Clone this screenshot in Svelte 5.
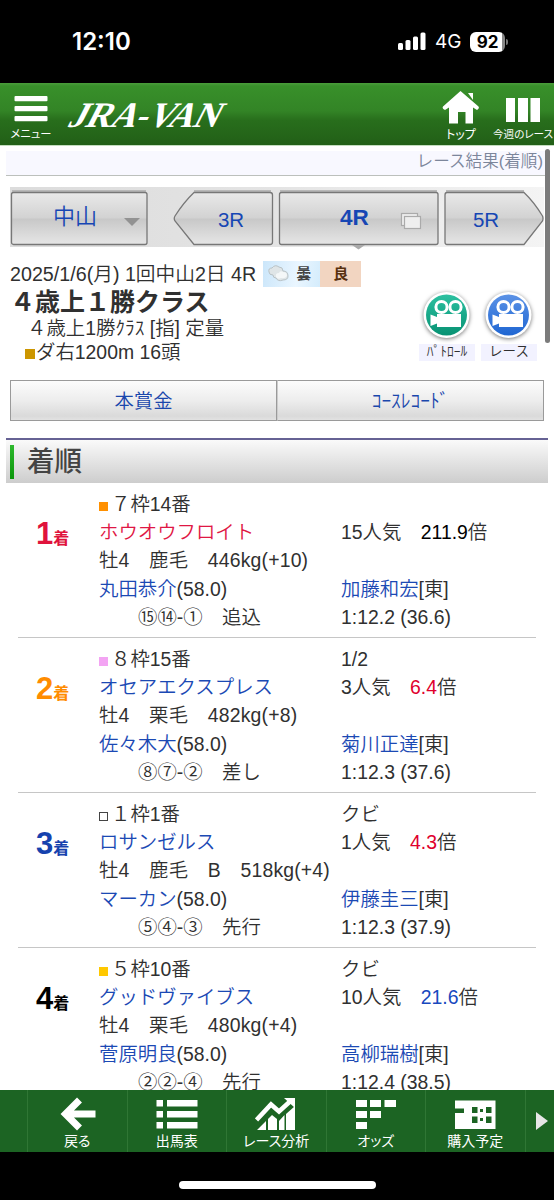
<script lang="ts">
	interface Result {
		rank: number;
		rankColor: string;
		frame: string;
		frameColor: string;
		number: number;
		name: string;
		winner?: boolean;
		body: string;
		jockey: string;
		corners: string;
		style: string;
		margin: string;
		popularity: number;
		odds: string;
		oddsColor: string;
		trainer: string;
		time: string;
	}

	const results: Result[] = [
		{
			rank: 1, rankColor: '#e0133c', frame: '７', frameColor: '#ff9000', number: 14,
			name: 'ホウオウフロイト', winner: true, body: '牡4　鹿毛　446kg(+10)',
			jockey: '丸田恭介', corners: '⑮⑭-①', style: '追込', margin: '',
			popularity: 15, odds: '211.9', oddsColor: '#000', trainer: '加藤和宏', time: '1:12.2 (36.6)'
		},
		{
			rank: 2, rankColor: '#ff8c00', frame: '８', frameColor: '#f3a4f3', number: 15,
			name: 'オセアエクスプレス', body: '牡4　栗毛　482kg(+8)',
			jockey: '佐々木大', corners: '⑧⑦-②', style: '差し', margin: '1/2',
			popularity: 3, odds: '6.4', oddsColor: '#e0002d', trainer: '菊川正達', time: '1:12.3 (37.6)'
		},
		{
			rank: 3, rankColor: '#1642ae', frame: '１', frameColor: '#fff', number: 1,
			name: 'ロサンゼルス', body: '牡4　鹿毛　B　518kg(+4)',
			jockey: 'マーカン', corners: '⑤④-③', style: '先行', margin: 'クビ',
			popularity: 1, odds: '4.3', oddsColor: '#e0002d', trainer: '伊藤圭三', time: '1:12.3 (37.9)'
		},
		{
			rank: 4, rankColor: '#000', frame: '５', frameColor: '#ffc800', number: 10,
			name: 'グッドヴァイブス', body: '牡4　栗毛　480kg(+4)',
			jockey: '菅原明良', corners: '②②-④', style: '先行', margin: 'クビ',
			popularity: 10, odds: '21.6', oddsColor: '#1848be', trainer: '高柳瑞樹', time: '1:12.4 (38.5)'
		}
	];

	const movies = [
		{ label: 'ﾊﾟﾄﾛｰﾙ', top: '#2cc0a0', bottom: '#079273' },
		{ label: 'レース', top: '#5b92e6', bottom: '#1f66d2' }
	];
</script>

<div class="phone">
	<div class="status">
		<span class="clock">12:10</span>
		<div class="signals">
			<svg width="28" height="19" viewBox="0 0 28 19" fill="#fff">
				<rect x="0" y="11" width="5" height="7" rx="1.5" />
				<rect x="7.5" y="8" width="5" height="10" rx="1.5" />
				<rect x="15" y="4.5" width="5" height="13.5" rx="1.5" />
				<rect x="22.5" y="0.5" width="5" height="17.5" rx="1.5" />
			</svg>
			<span class="carrier">4G</span>
			<span class="battery">92</span>
			<i class="battery-tip"></i>
		</div>
	</div>

	<header class="topbar">
		<div class="menu">
			<svg width="34" height="26" viewBox="0 0 34 26" fill="#fff">
				<rect x="0.5" y="0" width="33" height="5.3" rx="1" />
				<rect x="0.5" y="10" width="33" height="5.3" rx="1" />
				<rect x="0.5" y="20" width="33" height="5.3" rx="1" />
			</svg>
			<span>メニュー</span>
		</div>
		<svg class="logo" width="176" height="52" viewBox="0 0 176 52">
			<g transform="translate(4 36) skewX(-27)">
				<text x="0" y="0" textLength="150" lengthAdjust="spacingAndGlyphs">JRA-VAN</text>
			</g>
		</svg>
		<div class="shortcut home">
			<svg width="38" height="34" viewBox="0 0 38 34" fill="#fff">
				<path d="M18.5 0 36.5 15.5Q37.5 16.8 36.3 18L35 19 31 16.5V32.5H23.5V21H16V32.5H7V16.5L3 19 1.3 18Q0 16.8 1 15.5Z" />
				<path d="M26 2H31V9Z" />
			</svg>
			<span>トップ</span>
		</div>
		<div class="shortcut week">
			<svg width="36" height="26" viewBox="0 0 36 26" fill="#fff">
				<path d="M1 1H10V25H1ZM13 1H23V25H13ZM25.5 1H35V25H25.5Z" />
			</svg>
			<span>今週のレース</span>
		</div>
	</header>

	<main>
		<div class="scrollbar"></div>
		<div class="page-title">レース結果(着順)</div>

		<nav class="races">
			<svg class="race-nav" width="534" height="62" viewBox="0 0 534 62">
				<defs>
					<linearGradient id="steel" x1="0" y1="0" x2="0" y2="1">
						<stop offset="0" stop-color="#e9e9e9" />
						<stop offset="0.49" stop-color="#d2d2d2" />
						<stop offset="0.51" stop-color="#c8c8c8" />
						<stop offset="1" stop-color="#e6e6e6" />
					</linearGradient>
					<linearGradient id="strip" x1="0" y1="0" x2="1" y2="0">
						<stop offset="0" stop-color="#dcdcdc" />
						<stop offset="0.5" stop-color="#e4e4e4" />
						<stop offset="1" stop-color="#f4f4f4" />
					</linearGradient>
				</defs>
				<rect x="0" y="1" width="534" height="60" fill="url(#strip)" />
				<g fill="none" stroke="#b8b8b8" stroke-width="3">
					<path d="M2 5.5H136M184 5.5H261M270 5.5H427M436 5.5H514" />
				</g>
				<g fill="url(#steel)" stroke="#777" stroke-width="1.3">
					<rect x="1.5" y="6.5" width="135.5" height="52" rx="2" />
					<path d="M184 6.5H260Q262.5 6.5 262.5 9V56Q262.5 58.5 260 58.5H184L165 35Q163.5 32.5 165 30Q174 16 184 6.5Z" />
					<rect x="269.5" y="6.5" width="158.5" height="52" rx="2" />
					<path d="M437 6.5H514Q524 16 532.500 30Q533.500 32.500 532.500 35L514 58.5H437Q435 58.5 435 56V9Q435 6.5 437 6.5Z" />
				</g>
				<path d="M114 32H130L122 40Z" fill="#929292" />
				<path d="M342 59H355L348.5 63.500Z" fill="#aaa" />
				<g stroke="#aaa" stroke-width="1.2" fill="#eee">
					<rect x="391.5" y="27.5" width="16" height="12" />
					<rect x="394.5" y="30.5" width="16" height="12" />
				</g>
				<g text-anchor="middle" class="race-text">
					<text x="65" y="38" font-size="22">中山</text>
					<text x="221" y="40.500" font-size="20.500">3R</text>
					<text x="344.5" y="38.500" font-size="22.5" font-weight="700">4R</text>
					<text x="476" y="40.500" font-size="20.500">5R</text>
				</g>
			</svg>
		</nav>

		<section class="race-info">
			<div class="date-line">
				<span>2025/1/6(月) 1回中山2日 4R</span>
				<div class="conditions">
					<span class="weather">
						<svg width="22" height="20" viewBox="0 0 22 20">
							<path d="M2 8Q1 4 5 4Q8 0 12 3Q16 3 16 7Q21 7 21 12Q21 16 16 16Q11 18 9 14Q6 14 6 11Q2 11 2 8Z" fill="#dfe5e7" stroke="#b8c2c6" />
							<path d="M9 13Q8 9 12 9Q13 6 16 8Q20 8 20 12Q18 15 14 14Q11 16 9 13Z" fill="#f4f7f8" />
						</svg>
						曇
					</span>
					<span class="going">良</span>
				</div>
			</div>
			<h1>４歳上１勝クラス</h1>
			<div class="class-line">４歳上1勝ｸﾗｽ [指] 定量</div>
			<div class="course-line"><i class="surface"></i>ダ右1200m 16頭</div>
			<div class="movies">
				{#each movies as movie, i (movie.label)}
					<div class="movie">
						<svg width="56" height="56" viewBox="0 0 56 56">
							<defs>
								<linearGradient id={`movie-${i}`} x1="0" y1="0" x2="0" y2="1">
									<stop offset="0" stop-color={movie.top} />
									<stop offset="1" stop-color={movie.bottom} />
								</linearGradient>
							</defs>
							<circle class="disc" cx="27.5" cy="27" r="23" fill="#fff" />
							<circle cx="27.5" cy="27" r="20.5" fill={`url(#movie-${i})`} />
							<g fill="none" stroke="#fff" stroke-width="3">
								<circle cx="22.5" cy="19" r="5.6" />
								<circle cx="36.5" cy="19" r="5.6" />
							</g>
							<path d="M18 26H42V39H18V35.5L11.5 38V26.5L18 29Z" fill="#fff" />
						</svg>
						<span>{movie.label}</span>
					</div>
				{/each}
			</div>
		</section>

		<div class="links">
			<a href="#prize">本賞金</a>
			<a href="#record">ｺｰｽﾚｺｰﾄﾞ</a>
		</div>

		<h2>着順</h2>

		<div class="results">
			{#each results as r (r.rank)}
				<article>
					<div class="rank" style={`color: ${r.rankColor}`}><b>{r.rank}</b>着</div>
					<div class="horse">
						<div>
							<i class="frame" class:outlined={r.frame === '１'} style={`background: ${r.frameColor}`}></i>{r.frame}枠{r.number}番
						</div>
						<div class="link" class:winner={r.winner}>{r.name}</div>
						<div class="body">{r.body}</div>
						<div><span class="link">{r.jockey}</span>(58.0)</div>
						<div class="corners">{r.corners}　{r.style}</div>
					</div>
					<div class="record">
						<div>{r.margin}</div>
						<div>{r.popularity}人気　<span style={`color: ${r.oddsColor}`}>{r.odds}</span>倍</div>
						<div></div>
						<div><span class="link">{r.trainer}</span>[東]</div>
						<div>{r.time}</div>
					</div>
				</article>
			{/each}
		</div>
	</main>

	<footer>
		<div class="edge"></div>
		<div class="tab">
			<svg width="42" height="34" viewBox="0 0 42 34">
				<path d="M23.5 3 9.5 17 23.5 31M10 17H39.500" fill="none" stroke="#fff" stroke-width="7" />
			</svg>
			<span>戻る</span>
		</div>
		<div class="tab">
			<svg width="42" height="34" viewBox="0 0 42 34" fill="#fff">
				<path d="M0.5 3H7V9.5H0.5ZM11 3H41.5V9.5H11ZM0.5 14H7V20.5H0.5ZM11 14H41.5V20.5H11ZM0.5 25H7V31.5H0.5ZM11 25H41.5V31.5H11Z" />
			</svg>
			<span>出馬表</span>
		</div>
		<div class="tab">
			<svg width="42" height="34" viewBox="0 0 42 34">
				<path d="M2 33 11 24V33ZM13 22 17 18 22 22V33H13ZM24 24 29.5 18V33H24ZM31 17 40 9V33H31Z" fill="#fff" />
				<path d="M1.500 23 16 7.500 24 14.500 35 4.500" fill="none" stroke="#fff" stroke-width="4.500" />
				<path d="M29 1H40V11Z" fill="#fff" />
			</svg>
			<span>レース分析</span>
		</div>
		<div class="tab">
			<svg width="42" height="34" viewBox="0 0 42 34" fill="#fff">
				<path d="M1 3H12V10H1ZM15 3H26V10H15ZM29.5 3H41V10H29.5ZM1 14H12V21H1ZM15 14H26V21H15ZM1 25H12V32H1Z" />
			</svg>
			<span>オッズ</span>
		</div>
		<div class="tab">
			<svg width="42" height="34" viewBox="0 0 42 34">
				<path d="M1 3.5H41.5V32H1V16H10V11.5H1Z" fill="#fff" />
				<path d="M18 10H23.5V16H18ZM32 10H37.5V16H32ZM18 19.5H23.5V26H18ZM32 19.5H37.5V26H32ZM26 12H29V15H26ZM26 21H29V24H26Z" fill="#1c6423" />
			</svg>
			<span>購入予定</span>
		</div>
		<div class="more">
			<svg width="14" height="20" viewBox="0 0 14 20"><path d="M1 1 13 10 1 19Z" fill="#e6e6e6" /></svg>
		</div>
	</footer>
	<div class="home-area"><i></i></div>
</div>

<style>
	:global(body) {
		background: #000;
	}

	.phone {
		width: 554px;
		height: 1200px;
		overflow: hidden;
		display: flex;
		flex-direction: column;
		font-family: 'Liberation Sans', 'Noto Sans CJK JP', sans-serif;
		font-weight: 350;
		font-size: 19.4px;
		color: #303030;
		white-space: nowrap;
	}

	svg {
		display: block;
		flex: none;
	}

	.status {
		height: 83px;
		flex: none;
		box-sizing: border-box;
		padding: 0 46px 0 72px;
		background: #000;
		color: #fff;
		display: flex;
		align-items: center;
		justify-content: space-between;
		font-family: Inter, sans-serif;
	}

	.clock {
		font-size: 24px;
		font-weight: 600;
	}

	.signals {
		display: flex;
		align-items: center;
	}

	.carrier {
		margin-left: 9px;
		width: 27px;
		font-size: 19px;
		font-weight: 400;
	}

	.battery {
		margin-left: 8px;
		width: 35px;
		height: 20px;
		border-radius: 6px;
		background: linear-gradient(90deg, #fff 92%, #888 92%);
		color: #000;
		font-size: 17px;
		font-weight: 700;
		line-height: 20px;
		text-align: center;
	}

	.battery-tip {
		width: 2px;
		height: 6px;
		margin-left: 1px;
		border-radius: 0 2px 2px 0;
		background: #777;
	}

	.topbar {
		height: 62px;
		flex: none;
		display: flex;
		background: linear-gradient(#4a9d3b 0, #38902a 3px, #338426 45%, #286e1c 60%, #225f17);
		color: #fff;
		font-weight: 400;
		font-feature-settings: 'palt';
	}

	.menu {
		width: 62px;
		padding-top: 13px;
		display: flex;
		flex-direction: column;
		align-items: center;
		font-size: 11.3px;
		line-height: 25px;
	}

	.logo {
		margin-top: 8px;
	}

	.logo text {
		font-family: 'Liberation Serif', serif;
		font-size: 36px;
		font-weight: 700;
		fill: #fff;
	}

	.shortcut {
		display: flex;
		flex-direction: column;
		align-items: center;
	}

	.home {
		width: 62px;
		margin-left: auto;
		padding-top: 8px;
		font-size: 12px;
		line-height: 20px;
	}

	.week {
		width: 62px;
		padding-top: 14px;
		font-size: 10.6px;
		line-height: 23px;
	}

	main {
		position: relative;
		height: 945px;
		flex: none;
		box-sizing: border-box;
		overflow: hidden;
		background: #fff;
		border-top: 1px solid #c4ddbf;
	}

	.scrollbar {
		position: absolute;
		top: 3px;
		right: 4px;
		width: 5px;
		height: 194px;
		border-radius: 3px;
		background: #7b7b7b;
	}

	.page-title {
		margin: 5px 6px 0;
		height: 24px;
		padding-right: 5px;
		border-bottom: 1px solid #bcc0bc;
		background: #f8f8ff;
		color: #7c869b;
		font-size: 16.6px;
		line-height: 21px;
		text-align: right;
	}

	.races {
		padding: 10px 10px 0;
	}

	.race-nav {
		overflow: visible;
	}

	.race-text {
		fill: #1646b4;
	}

	.race-info {
		position: relative;
		height: 132px;
		padding-left: 10px;
	}

	.date-line {
		height: 40px;
		box-sizing: border-box;
		padding-top: 13px;
		display: flex;
		gap: 7px;
		font-size: 19.7px;
		line-height: 26px;
	}

	.conditions {
		display: flex;
		height: 26px;
		font-size: 15px;
		font-weight: 700;
		line-height: 26px;
	}

	.weather {
		width: 57px;
		display: flex;
		align-items: center;
		gap: 7px;
		padding-left: 4px;
		box-sizing: border-box;
		background: linear-gradient(100deg, #cbe6fa, #eaf6ff 60%, #d4ecfc);
		color: #444;
	}

	.going {
		width: 41px;
		background: #f2d5c1;
		color: #583010;
		text-align: center;
	}

	h1 {
		margin: 0;
		font-size: 25px;
		line-height: 28px;
		font-weight: 700;
	}

	.class-line {
		padding-left: 17px;
		line-height: 25px;
	}

	.course-line {
		padding-left: 15px;
		line-height: 22px;
	}

	.surface {
		display: inline-block;
		width: 10px;
		height: 10px;
		margin-right: 1px;
		background: #cc9600;
	}

	.movies {
		position: absolute;
		top: 40px;
		right: 17px;
		display: flex;
		gap: 6px;
	}

	.movie {
		width: 56px;
	}

	.movie span {
		display: block;
		height: 17px;
		background: #f2f2ff;
		font-size: 13.5px;
		line-height: 16px;
		text-align: center;
	}

	.disc {
		filter: drop-shadow(0 1px 2px #777);
	}

	.links {
		display: flex;
		margin: 0 10px;
	}

	.links a {
		flex: 1;
		height: 41px;
		box-sizing: border-box;
		border: 1px solid #9a9a9a;
		background: linear-gradient(#fcfcfc, #ededed 50%, #dadada 90%, #e2e2e2);
		color: #1a47ac;
		line-height: 41px;
		text-align: center;
		text-decoration: none;
	}

	.links a + a {
		border-left-color: #ccc;
	}

	h2 {
		height: 43px;
		margin: 17px 6px 0;
		border-top: 2px solid #666294;
		background: linear-gradient(#2eb82e, #0a960a) 4px 5px / 4px 34px no-repeat, linear-gradient(#fafafa, #cdcdcd);
		padding-left: 21px;
		color: #444;
		font-size: 27.5px;
		font-weight: 500;
		line-height: 43px;
	}

	article {
		height: 155px;
		margin: 0 18px;
		padding-top: 7px;
		box-sizing: border-box;
		display: grid;
		grid-template-columns: 81px 242px 1fr;
		border-bottom: 1px solid #c6c6c6;
		line-height: 28.2px;
	}

	.rank {
		padding: 28px 0 0 18px;
		font-size: 16px;
		font-weight: 700;
		line-height: 32px;
	}

	.rank b {
		font-size: 31px;
	}

	.horse > div,
	.record > div {
		height: 28.2px;
	}

	.body {
		letter-spacing: 0.18px;
	}

	.link {
		color: #1b49b4;
	}

	.winner {
		color: #df1744;
	}

	.frame {
		display: inline-block;
		width: 9px;
		height: 9px;
		margin-right: 3px;
	}

	.outlined {
		box-sizing: border-box;
		border: 1px solid #444;
	}

	.corners {
		padding-left: 39px;
	}

	footer {
		height: 62px;
		flex: none;
		display: flex;
		background: #1c6423;
		color: #fff;
		font-weight: 400;
	}

	.edge {
		width: 27px;
	}

	.tab {
		width: 99.5px;
		box-sizing: border-box;
		padding-top: 7px;
		border-left: 1px solid #2f7634;
		display: flex;
		flex-direction: column;
		align-items: center;
		font-size: 14px;
		line-height: 20px;
		font-feature-settings: 'palt';
	}

	.more {
		flex: 1;
		border-left: 1px solid #2f7634;
		padding: 21px 0 0 9px;
	}

	.home-area {
		height: 48px;
		display: flex;
		justify-content: center;
		background: #000;
	}

	.home-area i {
		width: 197px;
		height: 8px;
		margin-top: 29px;
		border-radius: 4px;
		background: #fff;
	}
</style>
